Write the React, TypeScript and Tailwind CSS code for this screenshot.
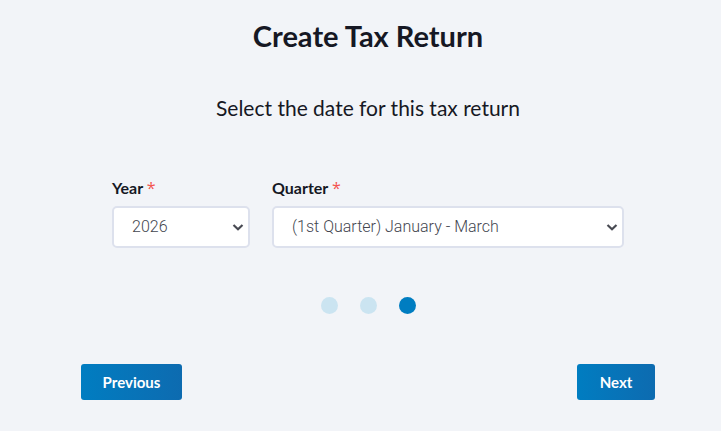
import { useState } from 'react';

const years = ['2026', '2025', '2024', '2023'];

const quarters = [
    '(1st Quarter) January - March',
    '(2nd Quarter) April - June',
    '(3rd Quarter) July - September',
    '(4th Quarter) October - December',
];

const steps = ['Return type', 'Business', 'Date'];

function SelectField({ id, label, options, className }: { id: string; label: string; options: string[]; className: string }) {
    const [value, setValue] = useState(options[0]);

    return (
        <div className={className}>
            <label htmlFor={id} className="block text-base leading-6 font-bold">
                {label} <span className="font-normal text-[#f4534f] font-['Open_Sans',sans-serif]">*</span>
            </label>
            <div className="relative mt-1.5">
                <select
                    id={id}
                    value={value}
                    onChange={(e) => setValue(e.target.value)}
                    className="block w-full h-[42px] appearance-none rounded-[5px] border-2 border-[#dde1ed] bg-white pl-[18px] pr-8 text-base font-light text-[#43464f] font-['Roboto',sans-serif]"
                >
                    {options.map((option) => (
                        <option key={option}>{option}</option>
                    ))}
                </select>
                <svg className="pointer-events-none absolute right-1.5 top-4 h-2.5 w-3" viewBox="0 0 12 10" fill="none" stroke="#484a52" strokeWidth="2.2">
                    <path d="M1.5 3 6 7.2 10.5 3" />
                </svg>
            </div>
        </div>
    );
}

export default function App() {
    return (
        <main className="min-h-screen bg-[#f2f4f8] pt-4 pr-[66px] pb-8 pl-[81px] text-[#161824] font-['Lato',sans-serif]">
            <form className="mx-auto max-w-3xl" onSubmit={(e) => e.preventDefault()}>
                {/* Headings */}
                <h1 className="text-center text-[29px] leading-10 font-bold">Create Tax Return</h1>
                <h2 className="mt-8 text-center text-[21px] leading-10">Select the date for this tax return</h2>

                {/* Return period */}
                <div className="mt-12 flex gap-[22px] px-[31px]">
                    <SelectField id="year" label="Year" options={years} className="w-[138px]" />
                    <SelectField id="quarter" label="Quarter" options={quarters} className="flex-1" />
                </div>

                {/* Progress */}
                <ol className="mt-[49px] flex justify-center gap-[22px]">
                    {steps.map((step, idx) => (
                        <li key={step} aria-label={step} className={`size-[17px] rounded-full ${idx === 2 ? 'bg-[#007dc1]' : 'bg-[#cbe4f1]'}`} />
                    ))}
                </ol>

                <div className="mt-[50px] flex justify-between">
                    <button type="button" className="h-9 w-[101px] rounded-[3px] bg-linear-to-r from-[#007dc1] to-[#0d6bb0] text-[15px] font-bold text-white">
                        Previous
                    </button>
                    <button type="submit" className="h-9 w-[78px] rounded-[3px] bg-linear-to-r from-[#007dc1] to-[#0d6bb0] text-[15px] font-bold text-white">
                        Next
                    </button>
                </div>
            </form>
        </main>
    );
}
